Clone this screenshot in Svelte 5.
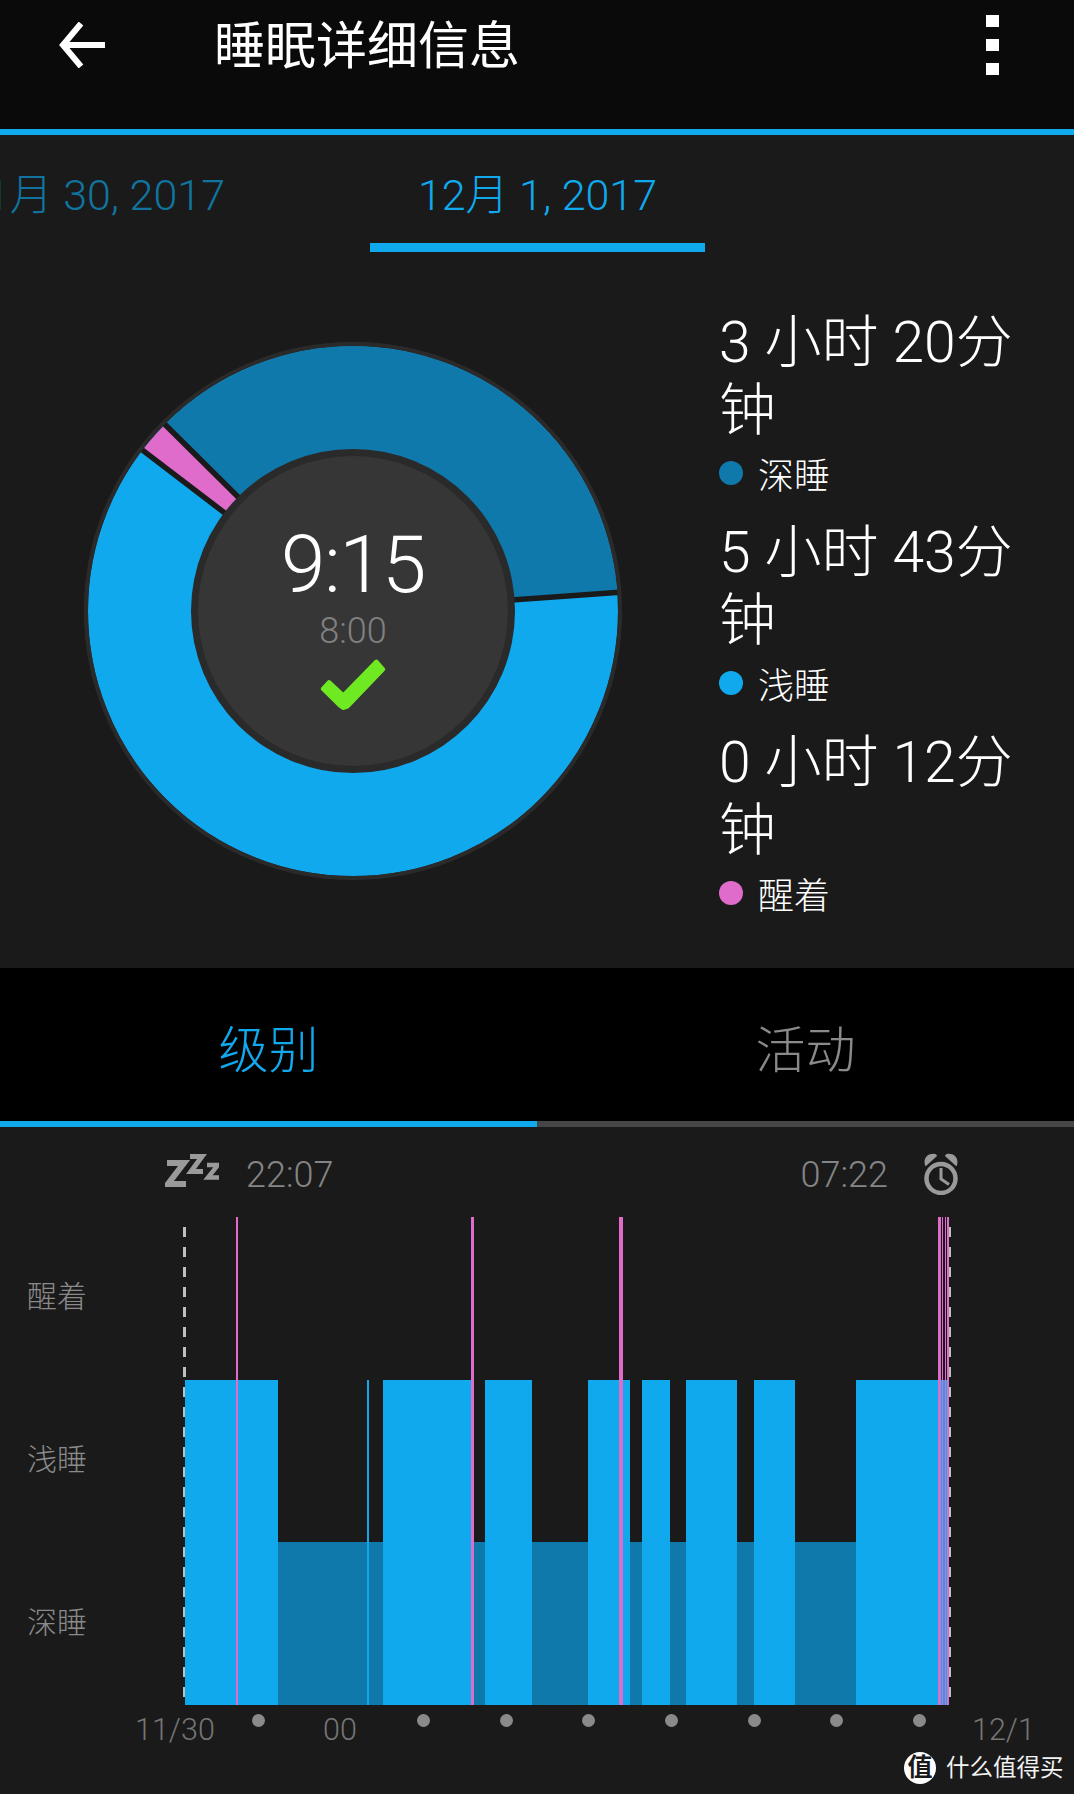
<script>
  const light = [[185,278],[367,369],[383,474],[485,532],[588,630],[642,670],[686,737],[754,795],[856,949]];
  const pink = [[236,238],[471,474],[619,623],[938,941],[941.5,942.5],[944.5,945.5],[947,949]];
  const dots = [258,423,506,588,671,754,836,919];
  const plotLeft = 183;
  const legend = [
    { time: '3 小时 20分钟', label: '深睡', color: '#0f79ab' },
    { time: '5 小时 43分钟', label: '浅睡', color: '#11a9ee' },
    { time: '0 小时 12分钟', label: '醒着', color: '#df6ccb' }
  ];
</script>

<div class="page">
  <header class="header">
    <svg class="back" viewBox="0 0 48 46" width="48" height="46">
      <path d="M47 23H5M23 1.500 5 23l18 21.500" fill="none" stroke="#fff" stroke-width="6" />
    </svg>
    <h1 class="title">睡眠详细信息</h1>
    <div class="kebab"><i></i><i></i><i></i></div>
  </header>

  <nav class="dates">
    <div class="date prev"><span>11月 30, 2017</span></div>
    <div class="date active">12月 1, 2017</div>
  </nav>

  <section class="hero">
    <svg class="donut" viewBox="83 341 540 540" width="540" height="540">
      <circle cx="353" cy="611" r="267" fill="#11a9ee" stroke="#2a2a2a" stroke-width="4" />
      <path d="M353 611 165 424.400A265 265 0 0 1 617.400 592.500Z" fill="#0f79ab" />
      <path d="M353 611 142.400 450.100A265 265 0 0 1 165 424.400Z" fill="#df6ccb" />
      <g stroke="#1a1a1a" stroke-width="5.500">
        <line x1="353" y1="611" x2="163" y2="422.500" />
        <line x1="353" y1="611" x2="140.500" y2="448.600" />
        <line x1="353" y1="611" x2="620" y2="592.300" />
      </g>
      <circle cx="353" cy="611" r="267" fill="none" stroke="#2a2a2a" stroke-width="4" />
      <circle cx="353" cy="611" r="162" fill="#2a2a2a" />
      <circle cx="353" cy="611" r="155" fill="#363636" />
      <text class="total" x="353" y="592">9:15</text>
      <text class="goal" x="353" y="643">8:00</text>
      <path d="M376.400 661.500 383.200 669.300 347.500 706.500 343 708 339.500 705.400 322.800 688.900 329 682 343.200 695.300Z" fill="#6fea22" stroke="#6fea22" stroke-width="4" stroke-linejoin="round" />
    </svg>

    <div class="legend">
      {#each legend as item}
        <div class="legend-item">
          <div class="legend-time">{item.time}</div>
          <div class="legend-row">
            <span class="dot" style="background:{item.color}"></span>
            <span>{item.label}</span>
          </div>
        </div>
      {/each}
    </div>
  </section>

  <div class="tabs">
    <div class="tab on">级别</div>
    <div class="tab">活动</div>
  </div>

  <div class="summary">
    <svg class="zzz" viewBox="165 1157 54 33" width="54" height="33">
      <g fill="none" stroke="#9a9a9a" stroke-linejoin="miter">
        <path d="M167 1166h17l-16 21h18" stroke-width="6" />
        <path d="M190 1159.500h12l-11 15h12" stroke-width="5" />
        <path d="M207 1168h11l-10 12.500h11" stroke-width="4.500" />
      </g>
    </svg>
    <span class="clock start">22:07</span>
    <span class="clock end">07:22</span>
    <svg class="alarm" viewBox="924 1153 34 42" width="34" height="42">
      <circle cx="941" cy="1178.500" r="14.500" fill="none" stroke="#9a9a9a" stroke-width="4.500" />
      <path d="M941 1168v11l8 5.500" fill="none" stroke="#9a9a9a" stroke-width="3" />
      <path d="M925 1165c-2-7 3-12 10-11 1 0 2 1 2 2l-11 10c0 0-1 0-1-1ZM957 1165c2-7-3-12-10-11-1 0-2 1-2 2l11 10c0 0 1 0 1-1Z" fill="#9a9a9a" />
    </svg>
  </div>

  <div class="chart">
    <div class="levels">
      <div>醒着</div>
      <div>浅睡</div>
      <div>深睡</div>
    </div>
    <div class="plot">
      <div class="dash dash-start"></div>
      <div class="dash dash-end"></div>
      <div class="deep"></div>
      {#each light as [a, b]}
        <div class="light" style="left:{a - plotLeft}px;width:{b - a}px"></div>
      {/each}
      {#each pink as [a, b]}
        <div class="awake" style="left:{a - plotLeft}px;width:{b - a}px"></div>
      {/each}
    </div>
  </div>

  <div class="axis">
    <span class="tick t-start">11/30</span>
    <span class="tick t-mid">00</span>
    <span class="tick t-end">12/1</span>
    {#each dots as x}
      <i class="axis-dot" style="left:{x}px"></i>
    {/each}
  </div>

  <div class="mark">
    <span class="mark-logo">值</span>
    <span class="mark-text">什么值得买</span>
  </div>
</div>

<style>
  :global(body) { margin: 0; background: #1a1a1a; }
  .page {
    position: relative;
    width: 1074px;
    height: 1794px;
    overflow: hidden;
    background: #1a1a1a;
    font-family: Roboto, "Noto Sans CJK SC", sans-serif;
    font-weight: 300;
  }

  .header {
    box-sizing: border-box;
    display: flex;
    height: 135px;
    background: #0a0a0a;
    border-bottom: 6px solid #11a9ee;
    color: #fff;
  }
  .back { margin: 22px 0 0 58px; }
  .title {
    margin: 18px 0 0 108px;
    font-size: 51px;
    line-height: 58px;
    font-weight: 400;
  }
  .kebab {
    display: flex;
    flex-direction: column;
    gap: 12px;
    margin: 15px 75px 0 auto;
  }
  .kebab i { display: block; width: 13px; height: 12px; background: #fff; }

  .dates { display: flex; height: 117px; font-size: 43px; line-height: 50px; }
  .date { box-sizing: border-box; white-space: nowrap; }
  .prev {
    display: flex;
    justify-content: flex-end;
    width: 370px;
    padding: 35px 145px 0 0;
    color: #10749f;
  }
  .active {
    width: 335px;
    padding-top: 35px;
    border-bottom: 9px solid #11a9ee;
    text-align: center;
    color: #11a9ee;
  }

  .hero { display: flex; height: 716px; }
  .donut { margin: 89px 0 0 83px; flex: none; }
  .total { font-size: 80px; fill: #fff; text-anchor: middle; font-weight: 300; letter-spacing: -1.500px; }
  .goal { font-size: 36px; fill: #808080; text-anchor: middle; }

  .legend {
    display: flex;
    flex-direction: column;
    gap: 18px;
    width: 320px;
    margin: 57px 0 0 96px;
    color: #fff;
  }
  .legend-time { font-size: 57px; line-height: 68px; }
  .legend-row {
    display: flex;
    align-items: center;
    gap: 15px;
    height: 56px;
    font-size: 36px;
  }
  .dot { width: 24px; height: 24px; border-radius: 50%; }

  .tabs { display: flex; height: 159px; background: #000; }
  .tab {
    box-sizing: border-box;
    flex: 1;
    height: 159px;
    padding-top: 51px;
    font-size: 50px;
    line-height: 64px;
    text-align: center;
    color: #8a8a8a;
    border-bottom: 6px solid #464646;
  }
  .tab.on { color: #11a9ee; border-bottom-color: #11a9ee; }

  .summary {
    display: flex;
    align-items: center;
    height: 90px;
    padding: 6px 0 0 165px;
    box-sizing: border-box;
    color: #858585;
    font-size: 36px;
  }
  .zzz { margin-top: -9px; }
  .start { margin-left: 27px; }
  .end { margin-left: 467px; }
  .alarm { margin: -2px 0 0 36px; }

  .chart { display: flex; align-items: flex-start; height: 488px; }
  .levels {
    display: grid;
    grid-template-rows: repeat(3, 1fr);
    align-items: center;
    width: 183px;
    height: 488px;
    margin-top: -4px;
    padding-left: 27px;
    box-sizing: border-box;
    font-size: 30px;
    color: #8a8a8a;
  }
  .plot { position: relative; flex: 1; height: 488px; }
  .dash {
    position: absolute;
    top: 10px;
    width: 3px;
    height: 470px;
    background: repeating-linear-gradient(#c0c0c0 0 10px, transparent 10px 20px);
  }
  .dash-start { left: 0; }
  .dash-end { left: 765px; }
  .deep { position: absolute; left: 95px; width: 671px; top: 325px; height: 163px; background: #0f79ab; }
  .light { position: absolute; top: 163px; height: 325px; background: #11a9ee; }
  .awake { position: absolute; top: 0; height: 488px; background: #df6ccb; }

  .axis { position: relative; height: 89px; }
  .tick { position: absolute; top: 7px; font-size: 30.500px; line-height: 36px; color: #757575; }
  .t-start { left: 135px; }
  .t-mid { left: 323px; }
  .t-end { left: 972px; }
  .axis-dot {
    position: absolute;
    top: 9px;
    width: 13px;
    height: 13px;
    margin-left: -6.500px;
    border-radius: 50%;
    background: #8a8a8a;
  }

  .mark {
    position: absolute;
    left: 904px;
    top: 1751px;
    display: flex;
    align-items: center;
    gap: 10px;
    color: #f2f2f2;
    font-size: 23.500px;
    font-weight: 400;
    white-space: nowrap;
  }
  .mark-logo {
    width: 32px;
    height: 32px;
    border-radius: 50%;
    background: #fff;
    color: #1a1a1a;
    font-size: 25px;
    line-height: 32px;
    font-weight: 700;
    text-align: center;
  }
  .mark-text { position: relative; top: -2px; }
</style>
